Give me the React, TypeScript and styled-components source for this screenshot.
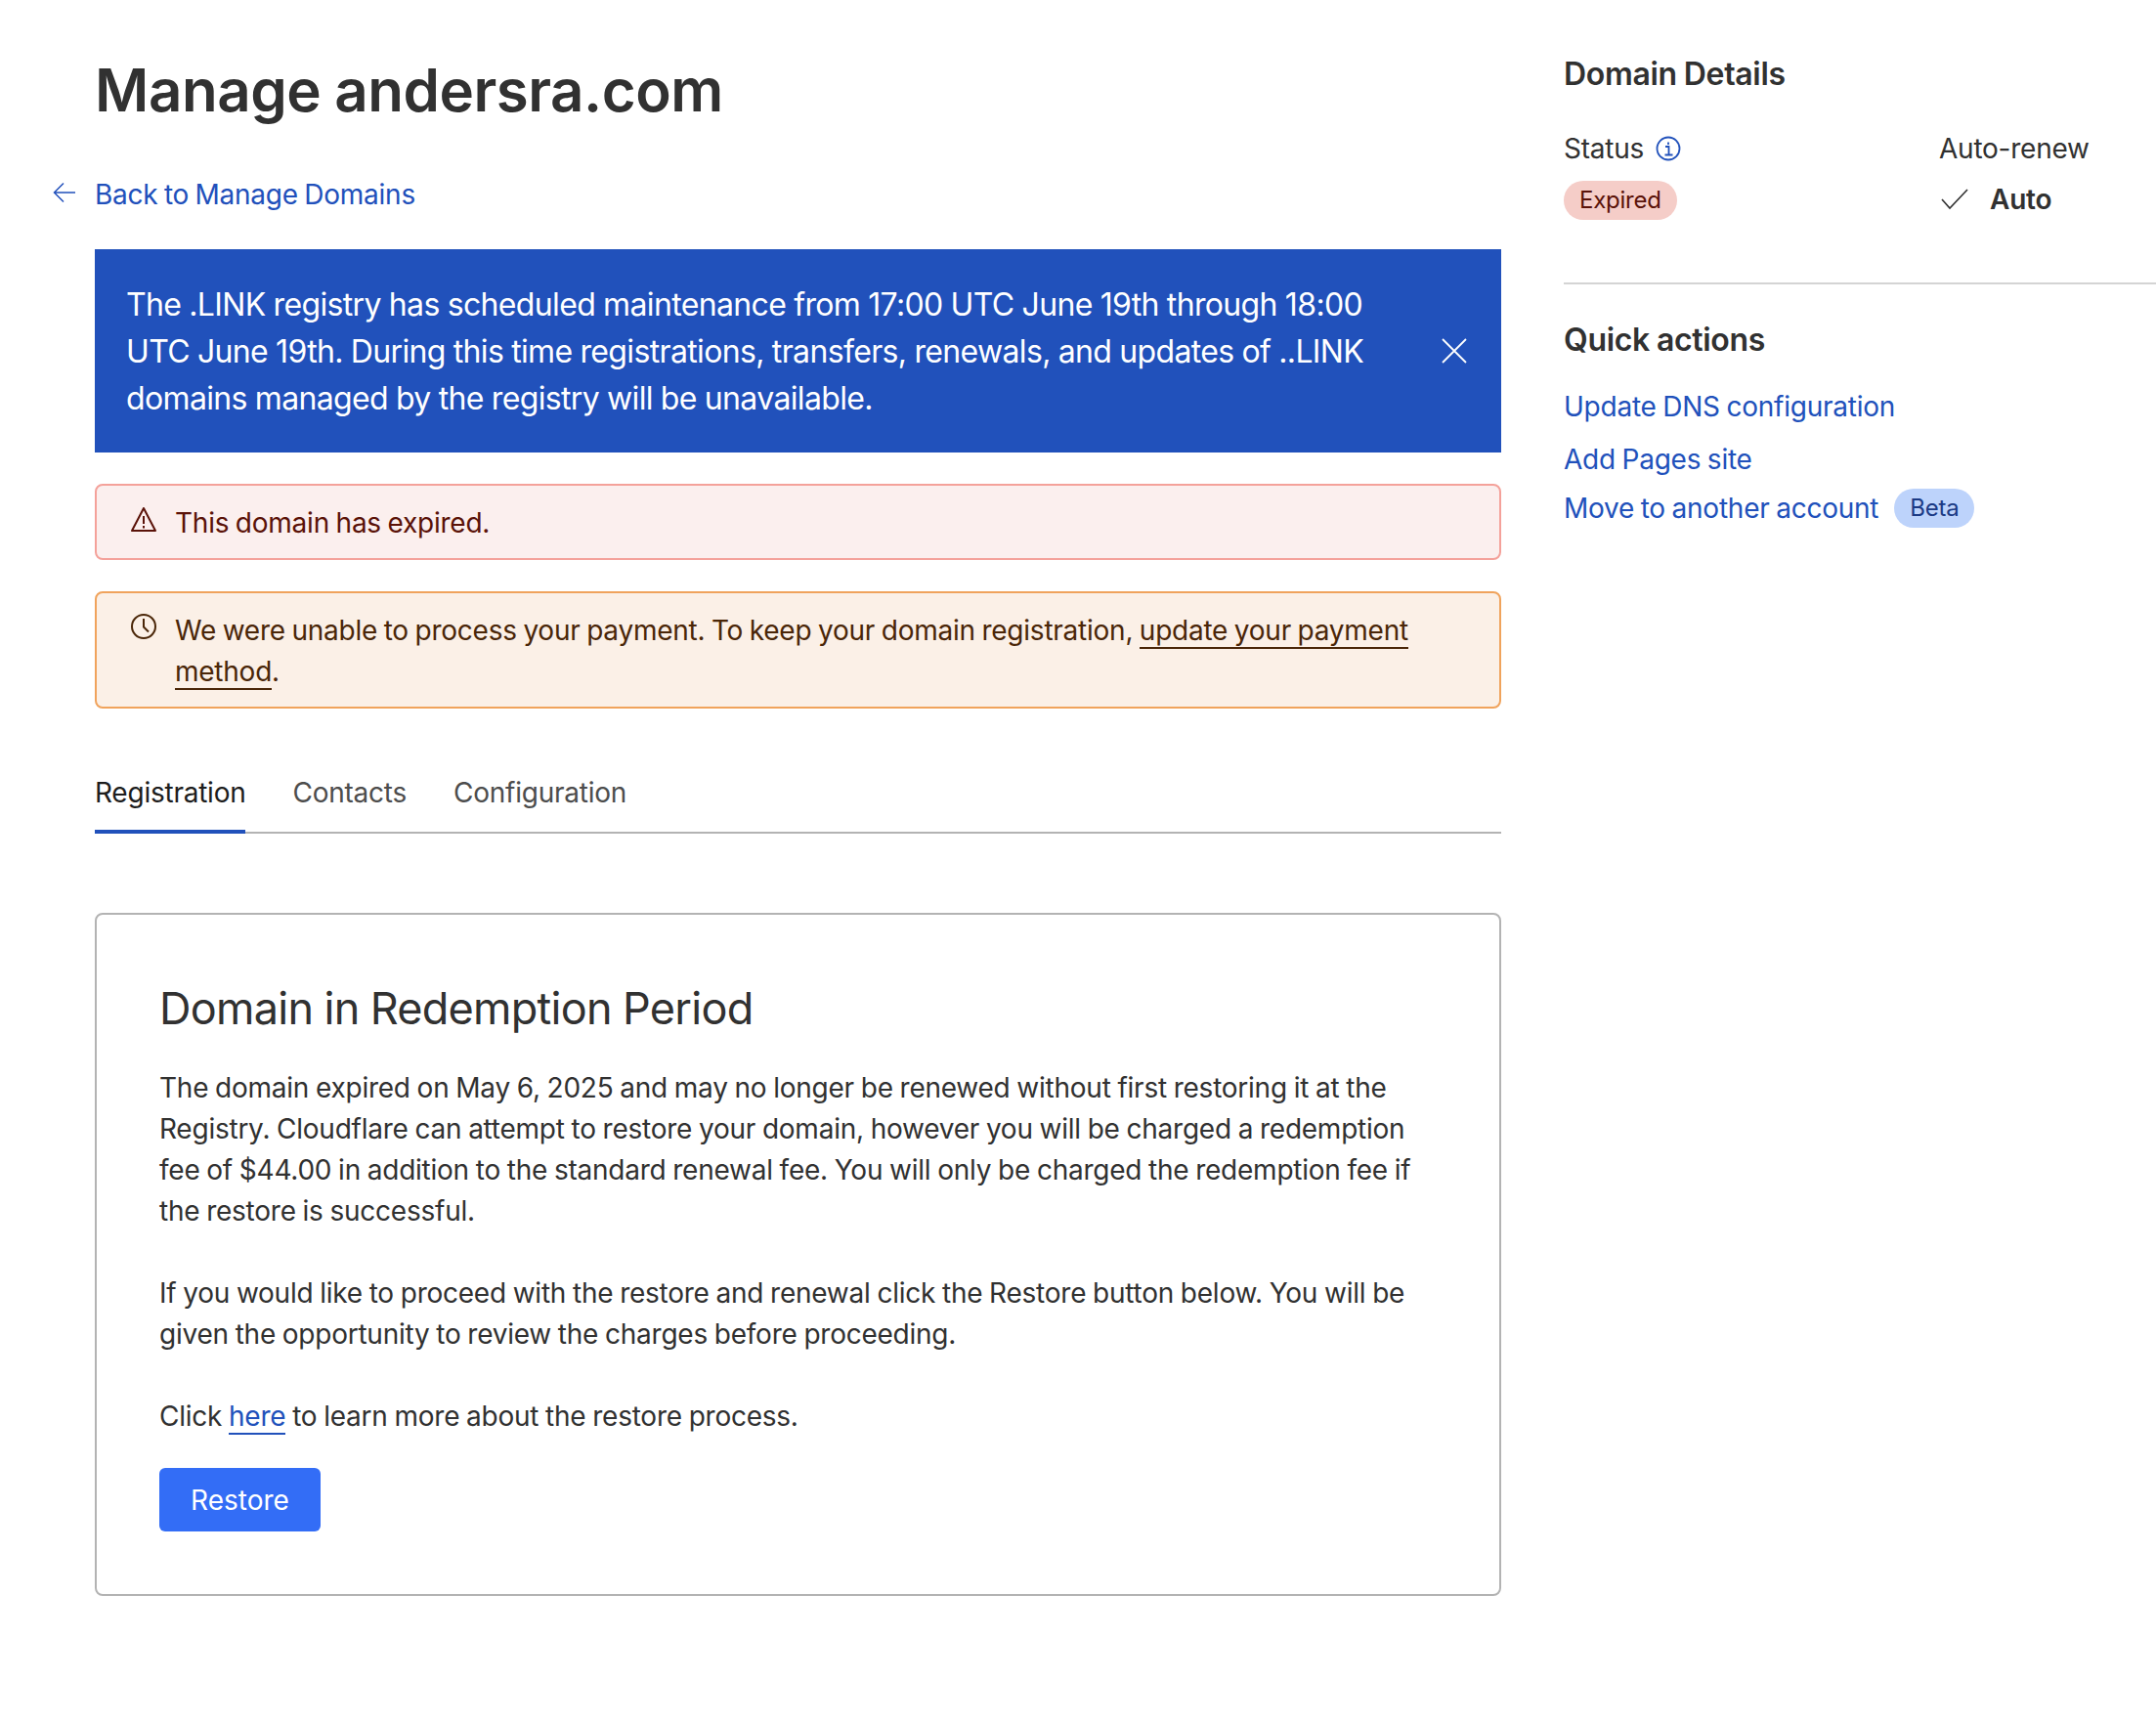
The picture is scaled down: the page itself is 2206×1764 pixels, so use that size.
import React from "react";
import styled, { createGlobalStyle } from "styled-components";

const GlobalStyle = createGlobalStyle`
  html, body {
    margin: 0;
    padding: 0;
    background: #ffffff;
    font-family: Inter, "Noto Sans", sans-serif;
    color: #313131;
    letter-spacing: -0.015em;
    word-spacing: -0.8px;
  }
  * {
    box-sizing: border-box;
  }
`;

const Page = styled.div`
  display: flex;
  width: 2206px;
  min-height: 1764px;
  overflow: hidden;
`;

const Main = styled.main`
  width: 1536px;
  padding: 54px 0 0 97px;
  flex-shrink: 0;
`;

const Title = styled.h1`
  margin: 0;
  font-size: 60px;
  line-height: 76px;
  font-weight: 600;
  letter-spacing: -0.0075em;
  color: #313131;
`;

const BackLink = styled.a`
  position: relative;
  display: block;
  margin-top: 48px;
  font-size: 28px;
  line-height: 42px;
  word-spacing: -1.2px;
  color: #2150bb;
  svg {
    position: absolute;
    left: -43px;
    top: 7px;
  }
`;

const Banner = styled.div`
  display: flex;
  align-items: center;
  justify-content: space-between;
  margin-top: 35px;
  height: 208px;
  padding: 2px 32px 0;
  background: #2151bb;
  color: #ffffff;
  font-size: 32px;
  line-height: 48px;
  letter-spacing: -0.02em;
  word-spacing: -0.4px;
`;

const BannerText = styled.div`
  width: 1290px;
`;

const CloseButton = styled.button`
  display: flex;
  padding: 0;
  margin: -2px 3px 0 0;
  border: 0;
  background: none;
  color: #ffffff;
`;

const Alert = styled.div<{ $tone: "danger" | "warning" }>`
  display: flex;
  gap: 18px;
  margin-top: 32px;
  padding: 17px 32px 15px 34px;
  border: 2px solid ${(p) => (p.$tone === "danger" ? "#f4a19a" : "#f0a35c")};
  border-radius: 8px;
  background: ${(p) => (p.$tone === "danger" ? "#fbefee" : "#fbf0e7")};
  color: ${(p) => (p.$tone === "danger" ? "#5a1208" : "#4a2608")};
  font-size: 28px;
  line-height: 42px;
  word-spacing: -1px;
  svg {
    flex-shrink: 0;
    margin-top: 3px;
  }
  a {
    color: inherit;
    text-decoration: none;
    border-bottom: 2px solid currentColor;
  }
`;

const Tabs = styled.nav`
  display: flex;
  gap: 48px;
  margin-top: 51px;
  border-bottom: 2px solid #b3b3b3;
`;

const Tab = styled.a<{ $active?: boolean }>`
  height: 77px;
  margin-bottom: -2px;
  padding-top: 14px;
  font-size: 28px;
  line-height: 42px;
  color: ${(p) => (p.$active ? "#1d1d1d" : "#4d4d4d")};
  border-bottom: 4px solid ${(p) => (p.$active ? "#2151bb" : "transparent")};
`;

const Card = styled.section`
  margin-top: 81px;
  height: 699px;
  padding: 66px 64px 0 64px;
  border: 2px solid #b3b3b3;
  border-radius: 8px;
`;

const CardTitle = styled.h2`
  margin: 0;
  font-size: 45px;
  line-height: 60px;
  font-weight: 400;
  letter-spacing: -0.016em;
  color: #313131;
`;

const Paragraph = styled.p`
  margin: 0 0 42px;
  font-size: 28px;
  line-height: 42px;
  color: #313131;
  &:first-of-type {
    margin-top: 30px;
  }
  &:last-of-type {
    margin-bottom: 0;
  }
  a {
    color: #2151bb;
    text-decoration: none;
    border-bottom: 2px solid #2151bb;
  }
`;

const RestoreButton = styled.button`
  display: block;
  width: 165px;
  height: 65px;
  margin-top: 32px;
  padding: 0;
  border: 0;
  border-radius: 6px;
  background: #336df6;
  color: #ffffff;
  font-family: inherit;
  font-size: 28px;
  letter-spacing: 0;
`;

const Sidebar = styled.aside`
  flex: 1;
  margin-left: 64px;
  padding-top: 54px;
`;

const SideTitle = styled.h3`
  margin: 0;
  font-size: 32px;
  line-height: 44px;
  font-weight: 600;
  letter-spacing: -0.01em;
  color: #313131;
`;

const DetailsGrid = styled.div`
  display: grid;
  grid-template-columns: 384px 1fr;
  margin-top: 33px;
  padding-bottom: 64px;
  border-bottom: 2px solid #d4d4d4;
`;

const DetailColumn = styled.div`
  display: flex;
  flex-direction: column;
  gap: 12px;
`;

const DetailLabel = styled.div`
  display: flex;
  align-items: center;
  gap: 12px;
  font-size: 28px;
  line-height: 42px;
  color: #313131;
`;

const StatusPill = styled.span`
  align-self: flex-start;
  height: 40px;
  padding: 0 16px;
  border-radius: 20px;
  background: #f5cdc8;
  color: #5a1208;
  font-size: 24px;
  line-height: 40px;
`;

const AutoValue = styled.div`
  display: flex;
  align-items: center;
  gap: 20px;
  height: 40px;
  margin-top: -1px;
  font-size: 28px;
  font-weight: 600;
  color: #313131;
`;

const QuickActions = styled.div`
  padding-top: 35px;
`;

const ActionList = styled.div`
  display: flex;
  flex-direction: column;
  margin-top: 25px;
`;

const ActionLink = styled.a`
  display: flex;
  align-items: center;
  gap: 16px;
  height: 42px;
  font-size: 28px;
  line-height: 42px;
  word-spacing: -1px;
  color: #2151bb;
  margin-bottom: 12px;
  &:nth-child(2) {
    margin-bottom: 8px;
  }
`;

const BetaPill = styled.span`
  height: 40px;
  padding: 0 16px;
  border-radius: 20px;
  background: #bdd3fb;
  color: #1b3a85;
  font-size: 24px;
  line-height: 40px;
`;

const App = () => (
  <Page>
    <GlobalStyle />
    <Main>
      <Title>Manage andersra.com</Title>
      <BackLink>
        <svg width="24" height="24" viewBox="0 0 24 24" fill="none" stroke="currentColor" strokeWidth="1.5">
          <path d="M23 12H2M11 2.5 1.5 12l9.5 9.5" />
        </svg>
        Back to Manage Domains
      </BackLink>
      <Banner>
        <BannerText>
          The .LINK registry has scheduled maintenance from 17:00 UTC June 19th through 18:00 UTC June 19th. During this
          time registrations, transfers, renewals, and updates of ..LINK domains managed by the registry will be
          unavailable.
        </BannerText>
        <CloseButton aria-label="Close">
          <svg width="26" height="26" viewBox="0 0 26 26" fill="none" stroke="currentColor" strokeWidth="1.8">
            <path d="M1 1l24 24M25 1 1 25" />
          </svg>
        </CloseButton>
      </Banner>
      <Alert $tone="danger">
        <svg width="28" height="28" viewBox="0 0 28 28" fill="none" stroke="currentColor" strokeWidth="2">
          <path d="M14 3 2 26h24L14 3Z" strokeLinejoin="round" />
          <path d="M14 11v8M14 21v2.4" />
        </svg>
        <span>This domain has expired.</span>
      </Alert>
      <Alert $tone="warning">
        <svg width="28" height="28" viewBox="0 0 28 28" fill="none" stroke="currentColor" strokeWidth="2">
          <circle cx="14" cy="14" r="12" />
          <path d="M14 6v8.5l5 5" />
        </svg>
        <span>
          We were unable to process your payment. To keep your domain registration, <a>update your payment method</a>.
        </span>
      </Alert>
      <Tabs>
        <Tab $active>Registration</Tab>
        <Tab>Contacts</Tab>
        <Tab>Configuration</Tab>
      </Tabs>
      <Card>
        <CardTitle>Domain in Redemption Period</CardTitle>
        <Paragraph>
          The domain expired on May 6, 2025 and may no longer be renewed without first restoring it at the Registry.
          Cloudflare can attempt to restore your domain, however you will be charged a redemption fee of $44.00 in
          addition to the standard renewal fee. You will only be charged the redemption fee if the restore is
          successful.
        </Paragraph>
        <Paragraph>
          If you would like to proceed with the restore and renewal click the Restore button below. You will be given
          the opportunity to review the charges before proceeding.
        </Paragraph>
        <Paragraph>
          Click <a>here</a> to learn more about the restore process.
        </Paragraph>
        <RestoreButton>Restore</RestoreButton>
      </Card>
    </Main>
    <Sidebar>
      <SideTitle>Domain Details</SideTitle>
      <DetailsGrid>
        <DetailColumn>
          <DetailLabel>
            Status
            <svg width="26" height="26" viewBox="0 0 26 26" fill="none" stroke="#2151bb" strokeWidth="1.8">
              <circle cx="13" cy="13" r="11.5" />
              <path d="M10 11h3.5v8M9.5 19.5h8M13 6.5v2.5" />
            </svg>
          </DetailLabel>
          <StatusPill>Expired</StatusPill>
        </DetailColumn>
        <DetailColumn>
          <DetailLabel>Auto-renew</DetailLabel>
          <AutoValue>
            <svg width="32" height="32" viewBox="0 0 32 32" fill="none" stroke="#313131" strokeWidth="1.6">
              <path d="M3 16l8 9L29 6" />
            </svg>
            Auto
          </AutoValue>
        </DetailColumn>
      </DetailsGrid>
      <QuickActions>
        <SideTitle>Quick actions</SideTitle>
        <ActionList>
          <ActionLink>Update DNS configuration</ActionLink>
          <ActionLink>Add Pages site</ActionLink>
          <ActionLink>
            Move to another account
            <BetaPill>Beta</BetaPill>
          </ActionLink>
        </ActionList>
      </QuickActions>
    </Sidebar>
  </Page>
);

export default App;
